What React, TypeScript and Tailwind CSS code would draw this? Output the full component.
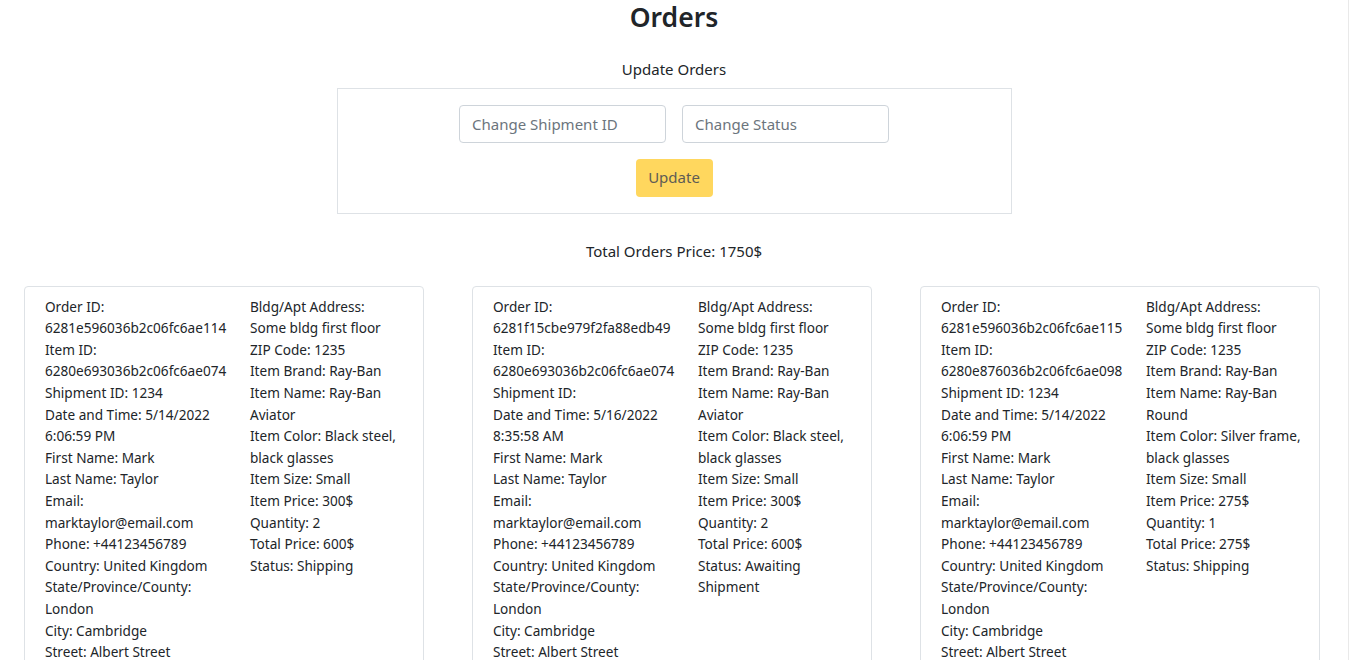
import React from "react";

type Card = { left: string[]; right: string[] };

const cards: Card[] = [
  {
    left: [
      "Order ID:",
      "6281e596036b2c06fc6ae114",
      "Item ID:",
      "6280e693036b2c06fc6ae074",
      "Shipment ID: 1234",
      "Date and Time: 5/14/2022",
      "6:06:59 PM",
      "First Name: Mark",
      "Last Name: Taylor",
      "Email:",
      "marktaylor@email.com",
      "Phone: +44123456789",
      "Country: United Kingdom",
      "State/Province/County:",
      "London",
      "City: Cambridge",
      "Street: Albert Street",
    ],
    right: [
      "Bldg/Apt Address:",
      "Some bldg first floor",
      "ZIP Code: 1235",
      "Item Brand: Ray-Ban",
      "Item Name: Ray-Ban",
      "Aviator",
      "Item Color: Black steel,",
      "black glasses",
      "Item Size: Small",
      "Item Price: 300$",
      "Quantity: 2",
      "Total Price: 600$",
      "Status: Shipping",
    ],
  },
  {
    left: [
      "Order ID:",
      "6281f15cbe979f2fa88edb49",
      "Item ID:",
      "6280e693036b2c06fc6ae074",
      "Shipment ID:",
      "Date and Time: 5/16/2022",
      "8:35:58 AM",
      "First Name: Mark",
      "Last Name: Taylor",
      "Email:",
      "marktaylor@email.com",
      "Phone: +44123456789",
      "Country: United Kingdom",
      "State/Province/County:",
      "London",
      "City: Cambridge",
      "Street: Albert Street",
    ],
    right: [
      "Bldg/Apt Address:",
      "Some bldg first floor",
      "ZIP Code: 1235",
      "Item Brand: Ray-Ban",
      "Item Name: Ray-Ban",
      "Aviator",
      "Item Color: Black steel,",
      "black glasses",
      "Item Size: Small",
      "Item Price: 300$",
      "Quantity: 2",
      "Total Price: 600$",
      "Status: Awaiting",
      "Shipment",
    ],
  },
  {
    left: [
      "Order ID:",
      "6281e596036b2c06fc6ae115",
      "Item ID:",
      "6280e876036b2c06fc6ae098",
      "Shipment ID: 1234",
      "Date and Time: 5/14/2022",
      "6:06:59 PM",
      "First Name: Mark",
      "Last Name: Taylor",
      "Email:",
      "marktaylor@email.com",
      "Phone: +44123456789",
      "Country: United Kingdom",
      "State/Province/County:",
      "London",
      "City: Cambridge",
      "Street: Albert Street",
    ],
    right: [
      "Bldg/Apt Address:",
      "Some bldg first floor",
      "ZIP Code: 1235",
      "Item Brand: Ray-Ban",
      "Item Name: Ray-Ban",
      "Round",
      "Item Color: Silver frame,",
      "black glasses",
      "Item Size: Small",
      "Item Price: 275$",
      "Quantity: 1",
      "Total Price: 275$",
      "Status: Shipping",
    ],
  },
];

export default function App() {
  return (
    <div
      className="h-[660px] w-[1351px] overflow-hidden bg-white text-[#212529]"
      style={{ fontFamily: '"Noto Sans", "Open Sans", sans-serif' }}
    >
      <div className="flex h-full">
        <div className="w-[1349px] border-r border-[#e9e9e9] flex flex-col items-center">
          <h1 className="text-[26.5px] leading-[34.6px] font-semibold">Orders</h1>
          <div className="mt-[22px] text-[15px] leading-[24px]">Update Orders</div>
          <div className="mt-[7px] w-[675px] border border-[#dee2e6] flex flex-col items-center py-[16px]">
            <div className="flex gap-[16px]">
              <input
                className="w-[207px] h-[38px] border border-[#ced4da] rounded-[4px] px-[12px] text-[15px] placeholder:text-[#6c757d] outline-none"
                placeholder="Change Shipment ID"
              />
              <input
                className="w-[207px] h-[38px] border border-[#ced4da] rounded-[4px] px-[12px] text-[15px] placeholder:text-[#6c757d] outline-none"
                placeholder="Change Status"
              />
            </div>
            <button className="mt-[16px] w-[77px] h-[38px] rounded-[4px] bg-[#ffd75e] text-[15px] text-[#5e5c55]">
              Update
            </button>
          </div>
          <div className="mt-[25px] text-[15px] leading-[24px]">Total Orders Price: 1750$</div>
          <div className="mt-[23px] self-start ml-[24px] w-[1296px] flex gap-[48px]">
            {cards.map((c, i) => (
              <div
                key={i}
                className="w-[400px] h-[420px] border border-[#dee2e6] rounded-[4px] pt-[9px] pl-[20px] flex text-[13.6px] leading-[21.6px]"
              >
                <div className="w-[205px] shrink-0">
                  {c.left.map((t, j) => (
                    <div key={j} className="whitespace-nowrap">
                      {t}
                    </div>
                  ))}
                </div>
                <div>
                  {c.right.map((t, j) => (
                    <div key={j} className="whitespace-nowrap">
                      {t}
                    </div>
                  ))}
                </div>
              </div>
            ))}
          </div>
        </div>
      </div>
    </div>
  );
}
